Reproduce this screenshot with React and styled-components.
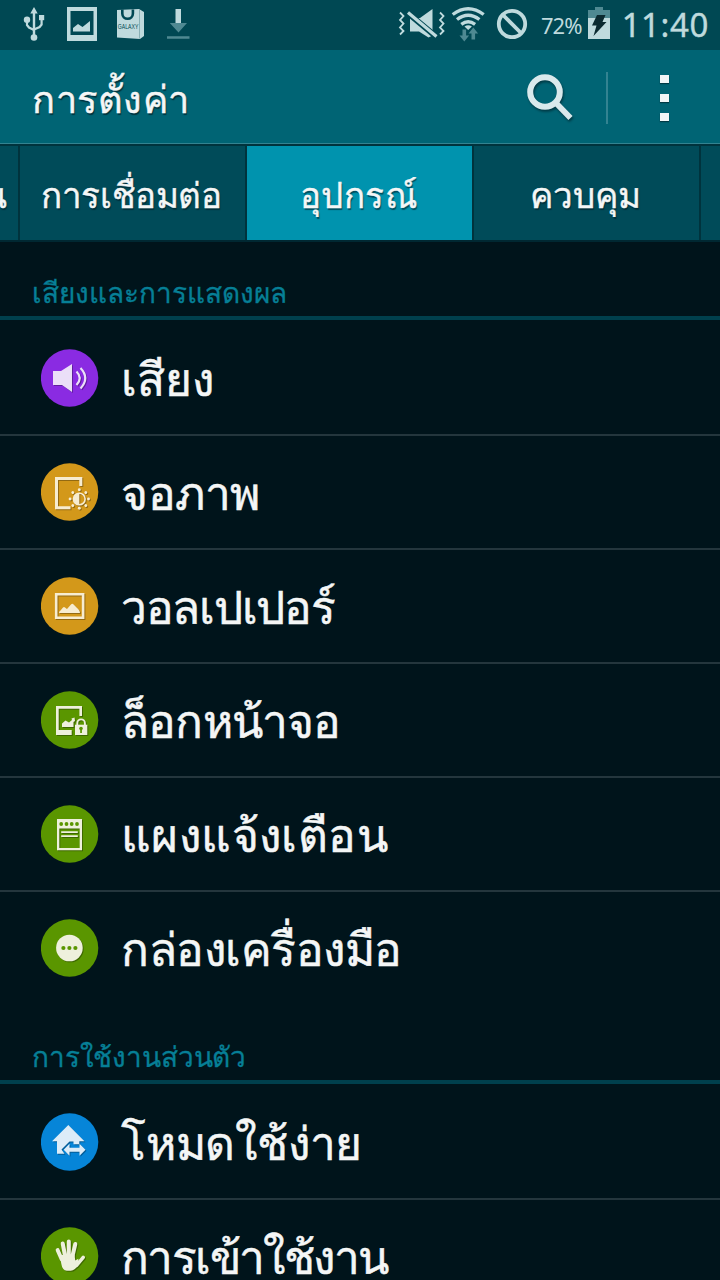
import React from 'react';

import styled, { createGlobalStyle } from 'styled-components';

const GlobalStyle = createGlobalStyle`
    * {
        box-sizing: border-box;
    }
    body {
        margin: 0;
        background: #00141b;
        color: #f4f6f6;
        font-family: 'Noto Sans', sans-serif;
    }
    svg {
        display: block;
        flex: none;
    }
`;

const Screen = styled.div`
    width: 720px;
    height: 1280px;
    overflow: hidden;
    background: #00141b;
`;

const StatusBar = styled.div`
    display: flex;
    align-items: center;
    justify-content: space-between;
    height: 50px;
    padding: 0 11px 0 22px;
    background: #004853;
    color: #bfdadd;
`;
const StatusGroup = styled.div`
    display: flex;
    align-items: center;
    height: 50px;
`;
const Battery = styled.span`
    width: 42px;
    margin-left: 13px;
    font-size: 22px;
    line-height: 46px;
    letter-spacing: -1px;
    white-space: nowrap;
`;
const Clock = styled.span`
    width: 88px;
    margin-left: 11px;
    font-size: 33px;
    line-height: 46px;
    letter-spacing: 0.6px;
    white-space: nowrap;
    text-align: right;
    -webkit-text-stroke: 0.4px;
`;

const ActionBar = styled.header`
    display: flex;
    align-items: center;
    height: 94px;
    padding: 0 51px 0 32px;
    background: #006474;
    border-bottom: 1px solid #338391;
`;
const Title = styled.h1`
    flex: 1;
    margin: 0;
    padding-top: 2px;
    font-size: 38px;
    font-weight: 400;
    line-height: 60px;
    letter-spacing: 0.5px;
    -webkit-text-stroke: 0.5px;
    text-shadow: 1px 2px 1px rgba(0, 30, 38, 0.7);
`;
const Separator = styled.div`
    width: 2px;
    height: 52px;
    margin: 2px 52px 0 32px;
    background: #338391;
`;
const MoreDots = styled.div`
    display: flex;
    flex-direction: column;
    gap: 11px;
    margin-top: 3px;
`;
const Dot = styled.span`
    width: 9px;
    height: 8px;
    background: #f1f6f7;
    box-shadow: 0 1px 1px rgba(0, 30, 38, 0.6);
`;

const Tabs = styled.nav`
    display: flex;
    height: 98px;
    overflow: hidden;
    background: #004b59;
    border-top: 2px solid #00333d;
    border-bottom: 2px solid #002832;
`;
const Tab = styled.div`
    display: flex;
    flex: none;
    align-items: center;
    justify-content: ${({ edge }) => (edge ? 'flex-end' : 'center')};
    width: ${({ width }) => width}px;
    padding: 3px ${({ edge }) => (edge ? 11 : 2)}px 0 0;
    overflow: hidden;
    background: ${({ active }) => (active ? '#0093ae' : '#004b59')};
    border-right: 2px solid #00333d;
    font-size: 35px;
    line-height: 60px;
    letter-spacing: ${({ spacing }) => spacing || 0}px;
    white-space: nowrap;
    -webkit-text-stroke: 0.4px;
    text-shadow: 1px 2px 1px rgba(0, 30, 38, 0.6);
`;

const SectionHeader = styled.h2`
    display: flex;
    align-items: flex-end;
    height: ${({ height }) => height}px;
    margin: 0 0 2px;
    padding: 0 0 1px 32px;
    border-bottom: 4px solid #00404d;
    color: #067f96;
    font-size: 28px;
    font-weight: 400;
    line-height: 46px;
    letter-spacing: ${({ spacing }) => spacing || 0}px;
    -webkit-text-stroke: 0.3px;
`;

const Row = styled.div`
    display: flex;
    align-items: center;
    height: ${({ last }) => (last ? 112 : 114)}px;
    padding: 0 0 0 41px;
    border-bottom: ${({ last }) => (last ? 0 : 2)}px solid #24363d;
`;
const RowLabel = styled.span`
    margin-left: 22px;
    font-size: 46px;
    line-height: 70px;
    letter-spacing: ${({ spacing }) => spacing || 0}px;
    white-space: nowrap;
    -webkit-text-stroke: 0.5px;
`;

const IconSvg = styled.svg`
    width: 58px;
    height: 58px;
`;
const Glyph = styled.g`
    filter: drop-shadow(1px 1px 0.5px rgba(0, 0, 0, 0.3));
`;

function RowIcon({ color, children }) {
    return (
        <IconSvg viewBox="0 0 58 58">
            <circle cx="28.6" cy="29" r="28.7" fill={color} />
            <Glyph fill="#eef0dc">{children}</Glyph>
        </IconSvg>
    );
}

const SoundIcon = () => (
    <RowIcon color="#8a2be2">
        <path fill="#ebdff8" d="M12 22h8l11-7v28l-10-7h-9z" />
        <path
            fill="none"
            stroke="#ebdff8"
            strokeWidth="2.2"
            d="M35.500 22.500q6.500 6.500 0 13.500M39.500 19q9.500 10 0 20.500"
        />
    </RowIcon>
);

const rays = [0, 45, 90, 135, 180, 225, 270, 315];

const DisplayIcon = () => (
    <RowIcon color="#d3981a">
        <path fill="none" stroke="#f7ecd0" strokeWidth="3" d="M39.8 23v-7.500H15.500v29.300H29.500" />
        <circle cx="38.3" cy="36" r="5.800" fill="none" stroke="#f7ecd0" strokeWidth="1.600" />
        <path fill="#f7ecd0" d="M38.300 30.300a5.700 5.700 0 0 0 0 11.400z" />
        {rays.map((a) => (
            <circle
                key={a}
                cx="47.500"
                cy="36"
                r="1.450"
                fill="#f7ecd0"
                transform={`rotate(${a} 38.3 36)`}
            />
        ))}
    </RowIcon>
);

const WallpaperIcon = () => (
    <RowIcon color="#d3981a">
        <path fill="none" stroke="#f7ecd0" strokeWidth="2.600" d="M15.200 17.200h26.900v23.600H15.200z" />
        <path
            fill="#f7ecd0"
            d="M18 36q0-2 1.500-2.500l2.500-3q1-1 2 0l2 1.500 4-4.500q1.300-1.500 2.600 0l5 5q1.400 1.500 1.400 3.500z"
        />
    </RowIcon>
);

const LockScreenIcon = () => (
    <RowIcon color="#5a9600">
        <path d="M15 15h26v10h-2.600v-7.300H17.700V39h13v5H15z" />
        <path d="M21 36v-3.500l3.500-3 3.500 2 3-2.500-.5-1.500 3-1 .5 3.500-1.500 1v5z" />
        <path fill="none" stroke="#eef0dc" strokeWidth="1.900" d="M36.300 34.500v-2.300a3.800 3.800 0 0 1 7.600 0v2.300" />
        <path d="M34 33.700h12.300V44H34z" />
        <circle cx="40" cy="37.500" r="1.800" fill="#5a9600" />
        <path fill="#5a9600" d="M39.200 38h1.700v4h-1.700z" />
    </RowIcon>
);

const PanelIcon = () => (
    <RowIcon color="#5a9600">
        <path fillRule="evenodd" d="M16 14h25v31.300H16zM18.300 23.500v19.500h20.400V23.500z" />
        {[20.2, 25.5, 30.7, 36].map((x) => (
            <circle key={x} cx={x} cy="19" r="1.900" fill="#5a9600" />
        ))}
        <path d="M20.200 26.200h16.600v1.800H20.200zM20.200 30.300h16.600v1.800H20.200z" />
    </RowIcon>
);

const ToolboxIcon = () => (
    <RowIcon color="#5a9600">
        <circle cx="28.4" cy="29" r="13.300" />
        {[22.4, 28.4, 34.4].map((x) => (
            <circle key={x} cx={x} cy="29" r="2.100" fill="#5a9600" />
        ))}
    </RowIcon>
);

const EasyModeIcon = () => (
    <RowIcon color="#0685d8">
        <path fill="#dcecf8" d="M27.300 12l16.200 16.300h-5.200v3H32.500v-2.800h-4l-8 8 3 4.200H16V28.300h-5z" />
        <path fill="#dcecf8" d="M22.700 36.700l5.800-6v4h10v-4l6 6-6 6v-4h-10v4z" />
    </RowIcon>
);

const HandIcon = () => (
    <RowIcon color="#5a9600">
        <g fill="none" stroke="#eef0dc" strokeLinecap="round" strokeWidth="4">
            <path d="M16.700 23.200l4 9M21.700 16.500l2.500 13M27.800 14.500v14M34.300 17l-2.800 12" />
            <path strokeWidth="3.500" d="M42.200 30.300l-6.700 8.200" />
        </g>
        <path d="M18.800 28h14.700l.8 5.500 3-1.800.5 5.500q-4 6.500-8 6.500h-4q-4.500-.5-5.500-7z" />
    </RowIcon>
);

const UsbIcon = () => (
    <svg width="24" height="50" viewBox="22 0 24 50" fill="#bfdadd">
        <path d="M34 7l3.700 6.500h-2.500V37h-2.400V13.500h-2.500z" />
        <circle cx="34" cy="37.500" r="3.300" />
        <circle cx="27" cy="19.700" r="3.200" />
        <path d="M39 15h5.200v5.200H39z" />
        <path
            fill="none"
            stroke="#bfdadd"
            strokeWidth="2.200"
            d="M27 20v5l2 2.500L34 30M41.600 20v4.500l-2 2.500L34 29.500"
        />
    </svg>
);

const PhotoIcon = () => (
    <svg width="30" height="50" viewBox="67 0 30 50" fill="#bfdadd">
        <path fillRule="evenodd" d="M67 7h30v34H67zM70.500 11v24h23V11z" />
        <path d="M73 31.500V28l5-4 4.500 3 7.500-6v10.500z" />
    </svg>
);

const StoreText = styled.text`
    font-family: 'Liberation Sans', sans-serif;
    font-size: 7.2px;
`;

const StoreIcon = () => (
    <svg width="28" height="50" viewBox="117 0 28 50">
        <path fill="#bfdadd" d="M117 10l22-1 5 3v24l-4 3-23-1.500z" />
        <path fill="none" stroke="#7ba5ab" strokeWidth="0.8" d="M139.500 9.500v29" />
        <path fill="none" stroke="#004853" strokeWidth="2.600" d="M122.300 9.500v4a5.300 5.300 0 0 0 10.600 0V9.500" />
        <StoreText x="117.800" y="28.800" textLength="20.500" lengthAdjust="spacingAndGlyphs" fill="#004853">
            GALAXY
        </StoreText>
    </svg>
);

const DownloadIcon = () => (
    <svg width="24" height="50" viewBox="166 0 24 50">
        <path fill="#bfdadd" d="M175.500 9h5.500v14.500h-5.500z" />
        <path fill="#4f8992" d="M169.800 23h17.200l-8.500 9.500zM167 36.300h22.500v2.500H167z" />
    </svg>
);

const MuteIcon = () => (
    <svg width="48" height="50" viewBox="398 0 48 50" fill="#bfdadd">
        <path
            fill="none"
            stroke="#bfdadd"
            strokeWidth="1.800"
            d="M400 12.500l3.500 3.500-3.500 4 3.500 3.500-3.500 4 3.500 3.500-3.500 3.500M440 12.500l3.500 3.500-3.500 4 3.500 3.500-3.500 4 3.500 3.500-3.500 3.500"
        />
        <path d="M410 18h10l12.500-9v26.500l-4 2L419 31.500h-9z" />
        <path stroke="#004853" strokeWidth="6" d="M406 11.500l33 27.500" />
        <path stroke="#bfdadd" strokeWidth="3.200" d="M408 12.500l28.500 24" />
    </svg>
);

const WifiIcon = () => (
    <svg width="34" height="50" viewBox="451 0 34 50">
        <g fill="none" stroke="#bfdadd" strokeWidth="3.400">
            <path d="M452.700 14.500q15.500-11.500 31 0M457 19.500q11.200-8.500 22.400 0M461.300 24.300q6.900-5 13.800 0" />
        </g>
        <path fill="#bfdadd" d="M464.500 26.500q3.700-2.500 7.400 0l-3.700 3.500z" />
        <path fill="#4f8992" d="M462.500 29.500h3.600v6h3l-4.800 6-4.800-6h3zM471.500 39.500h3.600v-6h3l-4.800-6-4.800 6h3z" />
    </svg>
);

const BlockIcon = () => (
    <svg width="32" height="50" viewBox="496 0 32 50" fill="none" stroke="#bfdadd" strokeWidth="3.800">
        <circle cx="512" cy="24" r="13.200" />
        <path d="M502.500 14.500l19 19" />
    </svg>
);

const BatteryIcon = () => (
    <svg width="22" height="50" viewBox="588 0 22 50">
        <path fill="#4f8992" d="M595 7h8v3h7v8.500h-22V10h7z" />
        <path fill="#bfdadd" d="M588 18h22v21h-22z" />
        <path fill="#0b2a30" d="M597 15h8.500l-3 7h4L593.500 36l3-10.500h-4.500z" />
    </svg>
);

const Spacer = styled.div`
    width: ${({ size }) => size}px;
`;

const SearchSvg = styled.svg`
    filter: drop-shadow(1px 2px 1px rgba(0, 30, 38, 0.6));
`;

const SearchIcon = () => (
    <SearchSvg width="48" height="50" viewBox="526 73 48 50" fill="none" stroke="#d9e9ec">
        <circle cx="545" cy="93" r="14.800" strokeWidth="6" />
        <path strokeWidth="5.800" d="M555 103l15.500 16" />
    </SearchSvg>
);

const sections = [
    {
        title: 'เสียงและการแสดงผล',
        height: 78,
        spacing: 0,
        rows: [
            { label: 'เสียง', Icon: SoundIcon, spacing: 0 },
            { label: 'จอภาพ', Icon: DisplayIcon, spacing: -0.5 },
            { label: 'วอลเปเปอร์', Icon: WallpaperIcon, spacing: -1.3 },
            { label: 'ล็อกหน้าจอ', Icon: LockScreenIcon, spacing: -0.8 },
            { label: 'แผงแจ้งเตือน', Icon: PanelIcon, spacing: 0.4 },
            { label: 'กล่องเครื่องมือ', Icon: ToolboxIcon, spacing: -0.5 },
        ],
    },
    {
        title: 'การใช้งานส่วนตัว',
        height: 80,
        spacing: -0.15,
        rows: [
            { label: 'โหมดใช้ง่าย', Icon: EasyModeIcon, spacing: -0.2 },
            { label: 'การเข้าใช้งาน', Icon: HandIcon, spacing: -1.6 },
        ],
    },
];

function App() {
    return (
        <Screen>
            <GlobalStyle />
            <StatusBar>
                <StatusGroup>
                    <UsbIcon />
                    <Spacer size={21} />
                    <PhotoIcon />
                    <Spacer size={20} />
                    <StoreIcon />
                    <Spacer size={21} />
                    <DownloadIcon />
                </StatusGroup>
                <StatusGroup>
                    <MuteIcon />
                    <Spacer size={5} />
                    <WifiIcon />
                    <Spacer size={11} />
                    <BlockIcon />
                    <Battery>72%</Battery>
                    <Spacer size={5} />
                    <BatteryIcon />
                    <Clock>11:40</Clock>
                </StatusGroup>
            </StatusBar>
            <ActionBar>
                <Title>การตั้งค่า</Title>
                <SearchIcon />
                <Separator />
                <MoreDots>
                    <Dot />
                    <Dot />
                    <Dot />
                </MoreDots>
            </ActionBar>
            <Tabs>
                <Tab width={20} edge>
                    น
                </Tab>
                <Tab width={227} spacing={-0.4}>
                    การเชื่อมต่อ
                </Tab>
                <Tab width={227} spacing={0.4} active>
                    อุปกรณ์
                </Tab>
                <Tab width={227}>ควบคุม</Tab>
                <Tab width={227} />
            </Tabs>
            {sections.map(({ title, height, spacing, rows }) => (
                <section key={title}>
                    <SectionHeader height={height} spacing={spacing}>
                        {title}
                    </SectionHeader>
                    {rows.map(({ label, Icon, spacing: rowSpacing }, i) => (
                        <Row key={label} last={i === rows.length - 1}>
                            <Icon />
                            <RowLabel spacing={rowSpacing}>{label}</RowLabel>
                        </Row>
                    ))}
                </section>
            ))}
        </Screen>
    );
}

export default App;
